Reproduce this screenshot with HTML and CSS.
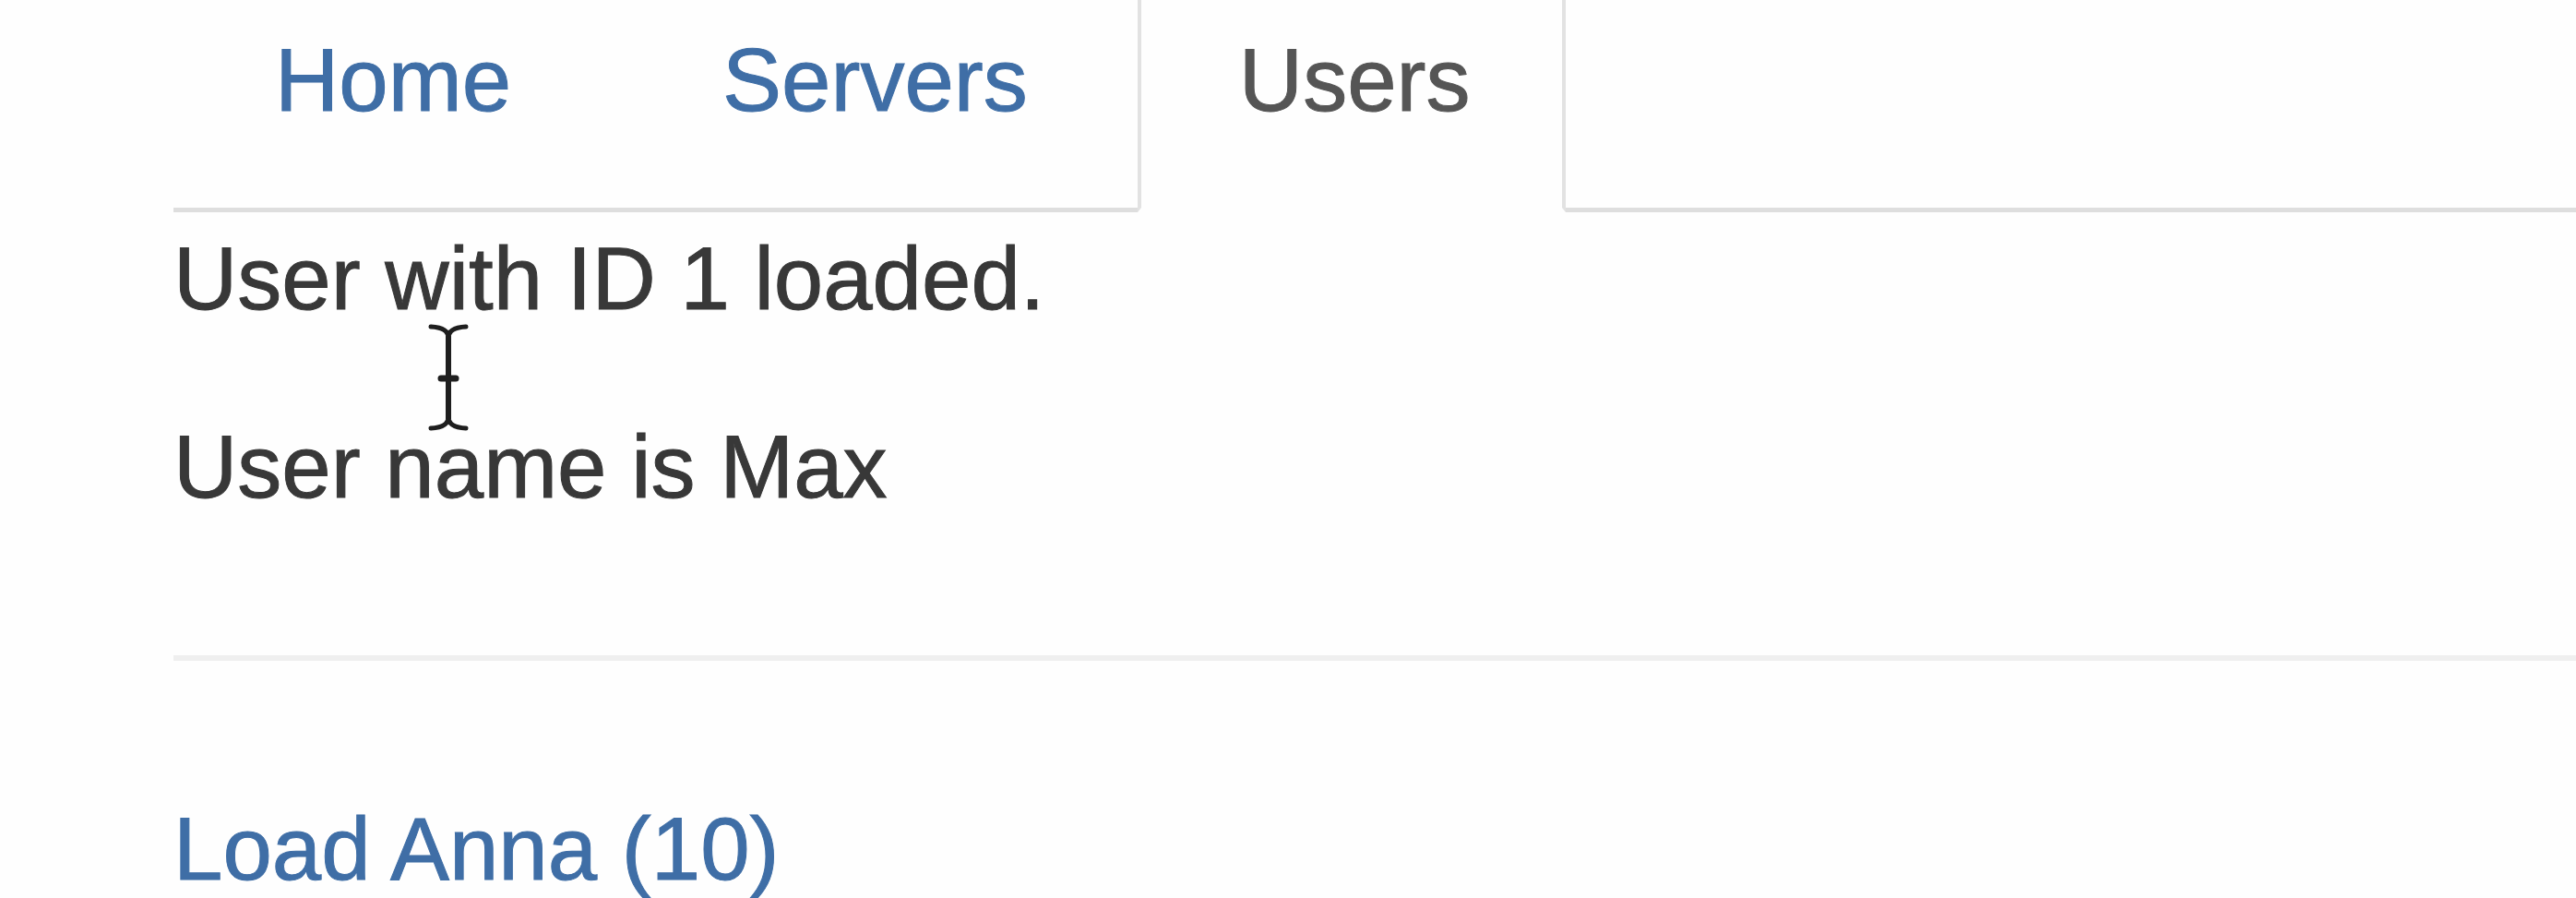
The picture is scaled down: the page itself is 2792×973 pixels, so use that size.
FILE: index.html
```html
<!DOCTYPE html>
<html lang="en">
<head>
<meta charset="utf-8">
<title>Users</title>
<link rel="stylesheet" href="styles.css">
</head>
<body>
<div class="page">
  <ul class="nav-tabs">
    <li class="tab"><a class="tab-link" href="#">Home</a></li>
    <li class="tab"><a class="tab-link" href="#">Servers</a></li>
    <li class="tab active"><a class="tab-link" href="#">Users</a></li>
  </ul>
  <div class="tab-content">
    <p class="line">User with ID 1 loaded.</p>
    <p class="line">User name is Max</p>
    <hr class="rule">
    <a class="load-link" href="#">Load Anna (10)</a>
  </div>
</div>
<svg class="ibeam" width="50" height="118" viewBox="0 0 50 118" aria-hidden="true">
  <path d="M6 4 Q25 5 25 16 Q25 5 44 4" fill="none" stroke="#1e1e1e" stroke-width="5" stroke-linecap="round"/>
  <path d="M25 14 L25 104" stroke="#1e1e1e" stroke-width="6"/>
  <path d="M17 60 L33 60" stroke="#1e1e1e" stroke-width="7" stroke-linecap="round"/>
  <path d="M6 114 Q25 113 25 102 Q25 113 44 114" fill="none" stroke="#1e1e1e" stroke-width="5" stroke-linecap="round"/>
</svg>
</body>
</html>
```

FILE: styles.css
```css
html, body {
  margin: 0;
  padding: 0;
  background: #fefefe;
  overflow: hidden;
}

body {
  position: relative;
  width: 2792px;
  height: 973px;
  font-family: "Liberation Sans", Arial, Helvetica, sans-serif;
  font-size: 96px;
  line-height: 136px;
  color: #383838;
  -webkit-text-stroke: 1px currentColor;
}

.page {
  margin-top: -49px;
  padding-left: 188px;
}

.nav-tabs {
  list-style: none;
  margin: 0;
  padding: 0;
  display: flex;
  border-bottom: 5px solid #dedede;
}

.tab {
  margin-bottom: -5px;
  margin-right: 16px;
}

.tab-link {
  display: block;
  padding: 64px 99px 70px 106px;
  border: 4px solid transparent;
  border-bottom-width: 5px;
  color: #3f6ea6;
  text-decoration: none;
}

.tab.active .tab-link {
  color: #555555;
  background: #fefefe;
  border-color: #e2e2e2;
  border-bottom-color: transparent;
}

.tab-content {
  padding-top: 4px;
}

.line {
  margin: 0 0 68px;
}

.rule {
  margin: 136px 0;
  border: 0;
  border-top: 6px solid #efefef;
  height: 0;
}

.load-link {
  color: #3f6ea6;
  text-decoration: none;
}

.ibeam {
  position: absolute;
  left: 461px;
  top: 350px;
}
```
